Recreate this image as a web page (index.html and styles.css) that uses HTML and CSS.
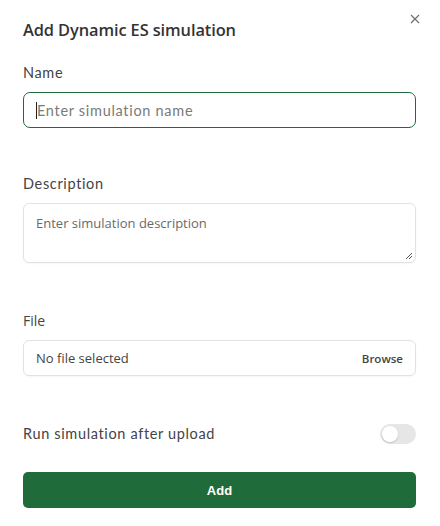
FILE: index.html
```html
<!DOCTYPE html>
<html>
<head>
<meta charset="utf-8">
<link rel="stylesheet" href="styles.css">
</head>
<body>
<div class="modal">
  <button class="close" aria-label="Close">
    <svg width="10" height="10" viewBox="0 0 10 10"><path d="M1 1L9 9M9 1L1 9" stroke="#6f6f6f" stroke-width="1.2" fill="none"/></svg>
  </button>
  <h1 class="title">Add Dynamic ES simulation</h1>

  <div class="field name-field">
    <label class="label">Name</label>
    <div class="input focused"><span class="caret"></span><span class="ph ph-poppins">Enter simulation name</span></div>
  </div>

  <div class="field desc-field">
    <label class="label">Description</label>
    <div class="textarea">
      <span class="ph">Enter simulation description</span>
      <svg class="grip" width="8" height="8" viewBox="0 0 8 8"><path d="M7 1L1 7M7 4L4 7" stroke="#555" stroke-width="1" fill="none"/></svg>
    </div>
  </div>

  <div class="field file-field">
    <label class="label label-file">File</label>
    <div class="file">
      <span class="file-text">No file selected</span>
      <span class="browse">Browse</span>
    </div>
  </div>

  <div class="toggle-row">
    <span class="label">Run simulation after upload</span>
    <span class="toggle"><span class="knob"></span></span>
  </div>

  <button class="add">Add</button>
</div>
</body>
</html>
```

FILE: styles.css
```css
* { box-sizing: border-box; }
html, body { margin: 0; padding: 0; background: #fff; }
body { width: 440px; height: 526px; overflow: hidden; }
.modal {
  position: relative;
  padding: 18px 24px 0 23px;
  display: flex;
  flex-direction: column;
}
.close {
  position: absolute;
  top: 14px;
  right: 19px;
  border: 0;
  background: none;
  padding: 0;
  width: 11px;
  height: 11px;
  display: flex;
}
.title {
  margin: 0;
  font-family: "Open Sans", sans-serif;
  font-weight: 600;
  font-size: 16.4px;
  line-height: 24px;
  color: #333;
  letter-spacing: -0.1px;
}
.label {
  font-family: "Lato", "Noto Sans", sans-serif;
  font-size: 14.5px;
  color: #444;
  line-height: 20px;
  letter-spacing: 0.65px;
}
.field { display: flex; flex-direction: column; gap: 9px; }
.name-field { margin-top: 21px; }
.desc-field { margin-top: 46px; }
.file-field { margin-top: 48px; }
.label-file { font-family: "Open Sans", sans-serif; font-size: 14px; letter-spacing: 0; }
.input {
  height: 36px;
  border: 1.5px solid #1f6b3a;
  border-radius: 7px;
  display: flex;
  align-items: center;
  padding-left: 12px;
}
.caret { width: 1px; height: 17px; background: #222; margin-right: 0; }
.ph { color: #777; font-size: 14px; }
.ph-poppins { font-family: "Lato", "Noto Sans", sans-serif; font-size: 14.5px; letter-spacing: 0.7px; color: #7a7a7a; }
.textarea {
  position: relative;
  height: 60px;
  border: 1px solid #e2e2e2;
  border-radius: 6px;
  box-shadow: 0 1px 2px rgba(0,0,0,0.04);
  padding: 10px 12px;
}
.textarea .ph { font-family: "Open Sans", sans-serif; font-size: 13px; color: #6a6a6a; }
.grip { position: absolute; right: 2px; bottom: 2px; }
.file {
  height: 36px;
  border: 1px solid #e2e2e2;
  border-radius: 6px;
  box-shadow: 0 1px 2px rgba(0,0,0,0.04);
  display: flex;
  align-items: center;
  justify-content: space-between;
  padding: 0 12px 0 12px;
  font-family: "Open Sans", sans-serif;
}
.file-text { font-size: 13px; color: #444; }
.browse { font-size: 11.5px; font-weight: 600; color: #444; }
.toggle-row {
  margin-top: 48px;
  display: flex;
  align-items: center;
  justify-content: space-between;
}
.toggle {
  width: 36px;
  height: 20px;
  border-radius: 10px;
  background: #e6e6e6;
  display: flex;
  align-items: center;
  padding: 0 2px;
}
.knob {
  width: 16px; height: 16px; border-radius: 50%;
  background: #fff;
  box-shadow: 0 1px 2px rgba(0,0,0,0.15);
}
.add {
  margin-top: 28px;
  height: 36px;
  border: 0;
  border-radius: 5px;
  background: #1f6b3a;
  color: #fff;
  font-family: "Liberation Sans", Arial, sans-serif;
  font-weight: 700;
  font-size: 13px;
}
```
